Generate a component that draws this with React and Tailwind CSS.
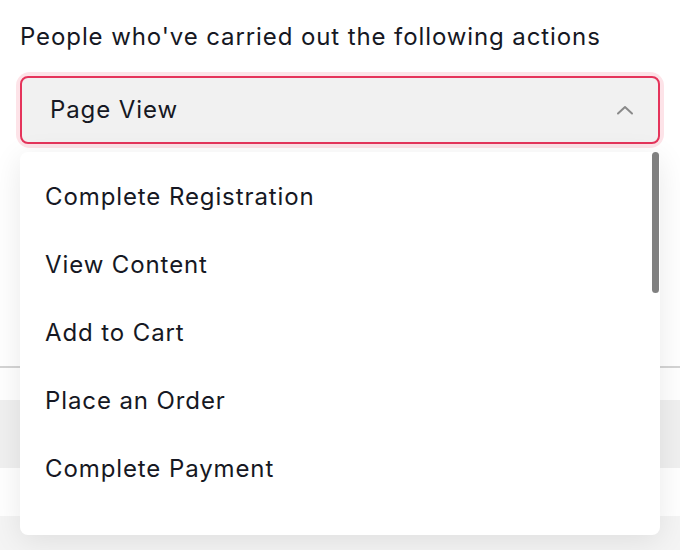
const options = [
  "Complete Registration",
  "View Content",
  "Add to Cart",
  "Place an Order",
  "Complete Payment",
];

export default function App() {
  return (
    <div className="relative w-[680px] h-[550px] overflow-hidden bg-white font-['Inter',sans-serif] text-[#161823]">
      <div className="px-5 pt-[20px]">
        <p className="text-[24px] leading-[34px] tracking-[0.9px]">
          People who've carried out the following actions
        </p>
        <div className="mt-[22px] rounded-[10px] ring-4 ring-[#fde3e8]">
          <div className="flex h-[68px] items-center justify-between rounded-[8px] border-2 border-[#e5345b] bg-[#f1f1f1] pl-7 pr-6">
            <span className="text-[24px] tracking-[0.9px]">Page View</span>
            <svg width="18" height="10" viewBox="0 0 18 10" fill="none">
              <path d="M2 8.5L9 2L16 8.5" stroke="#8a8a8a" strokeWidth="2" strokeLinecap="round" strokeLinejoin="round" />
            </svg>
          </div>
        </div>
      </div>

      {/* page content behind the menu */}
      <div className="mt-[222px] h-[2px] bg-[#d4d4d4]" />
      <div className="mt-[32px] h-[68px] bg-[#f0f0f0]" />
      <div className="mt-[48px] h-[40px] bg-[#f4f4f4]" />

      <div className="absolute left-5 top-[152px] w-[640px] h-[383px] rounded-[8px] bg-white shadow-[0_6px_30px_rgba(0,0,0,0.09)]">
        <div className="flex flex-col pt-[11px]">
          {options.map((o) => (
            <div key={o} className="flex h-[68px] items-center pl-[25px] text-[24px] tracking-[0.9px]">
              {o}
            </div>
          ))}
        </div>
        <div className="absolute right-[1px] top-0 h-[141px] w-[7px] rounded-full bg-[#808080]" />
      </div>
    </div>
  );
}
